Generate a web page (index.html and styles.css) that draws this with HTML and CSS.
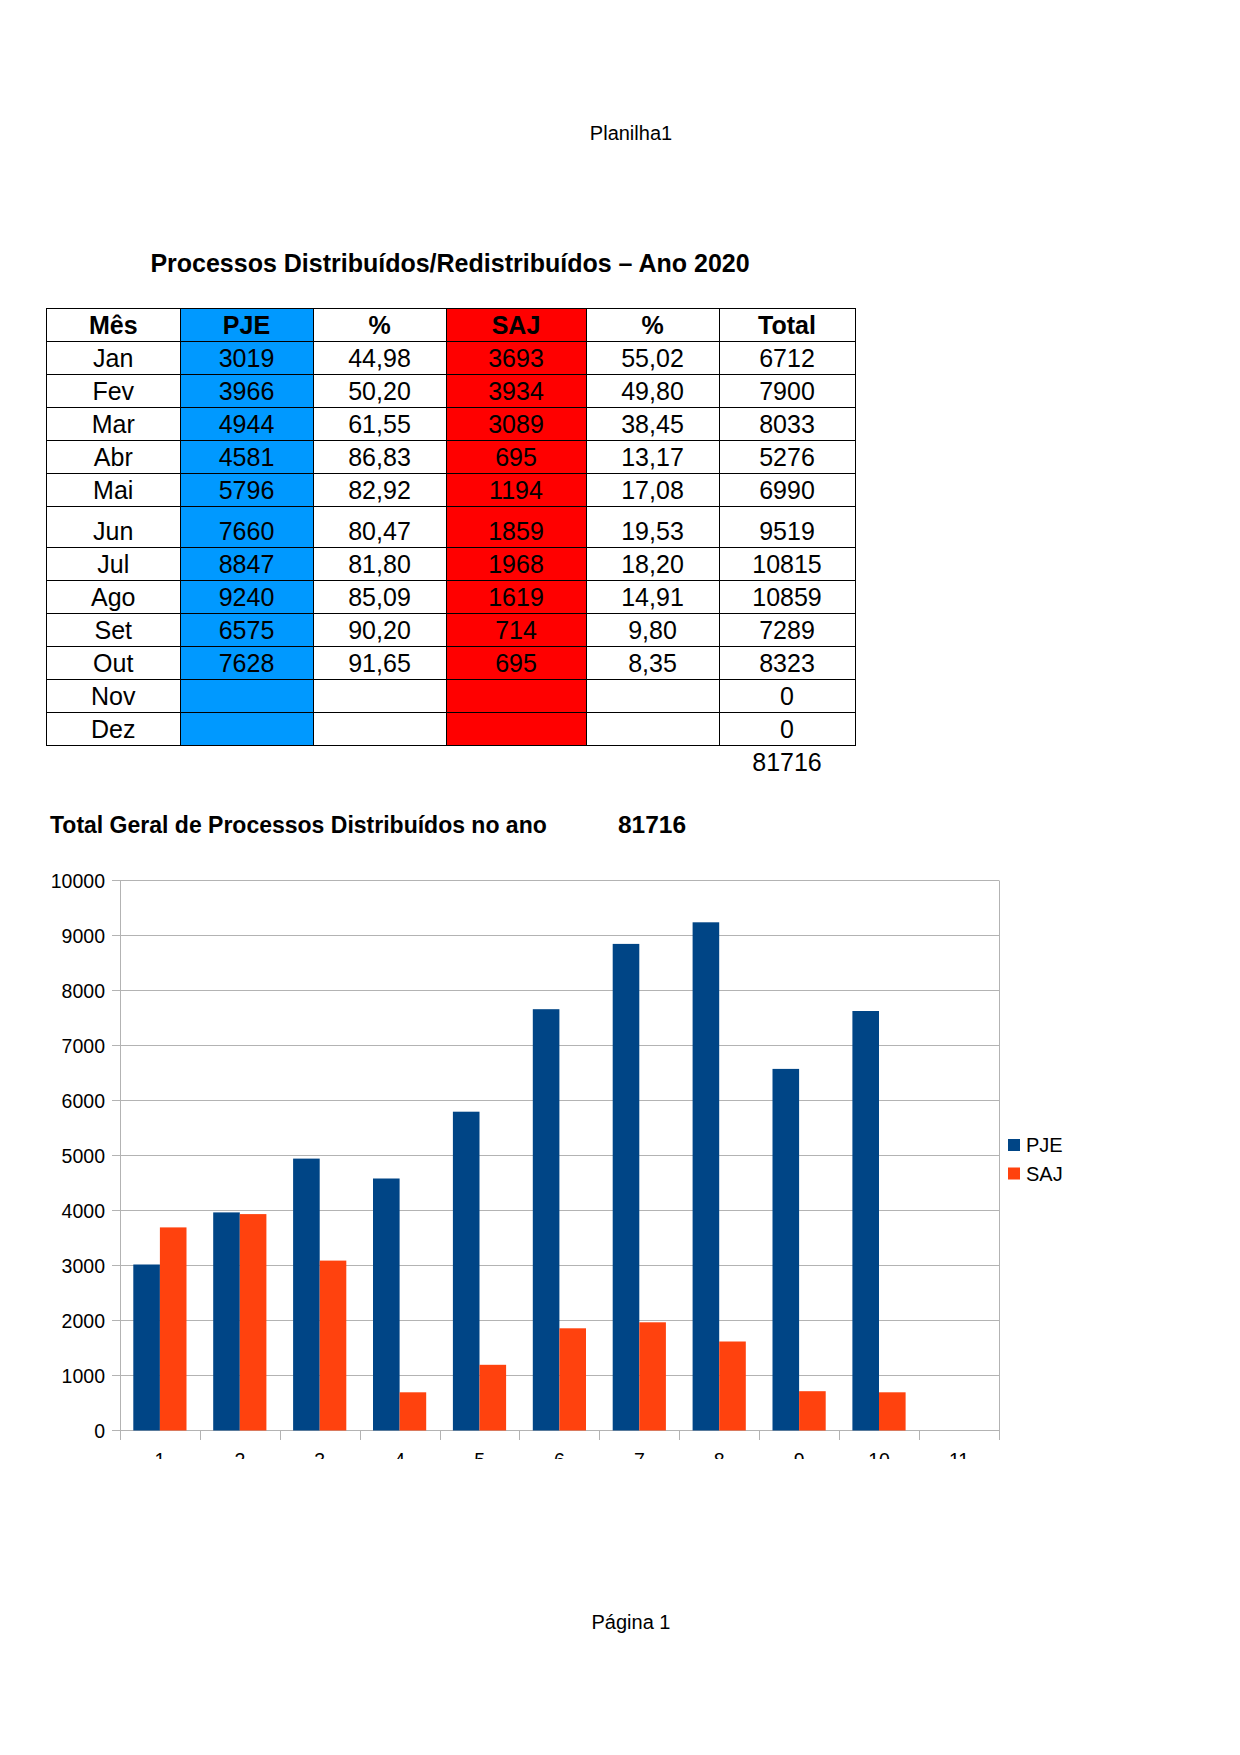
FILE: index.html
```html
<!DOCTYPE html>
<html lang="pt-BR">
<head>
<meta charset="utf-8">
<title>Planilha1</title>
<link rel="stylesheet" href="styles.css">
</head>
<body>
<div class="page">
  <header class="page-header">Planilha1</header>

  <section class="sheet">
    <h1 class="sheet-title">Processos Distribuídos/Redistribuídos – Ano 2020</h1>
    <table class="data">
      <colgroup>
        <col class="c-mes"><col class="c-pje"><col class="c-pct"><col class="c-saj"><col class="c-pct"><col class="c-total">
      </colgroup>
      <thead>
        <tr><th>Mês</th><th class="pje">PJE</th><th>%</th><th class="saj">SAJ</th><th>%</th><th>Total</th></tr>
      </thead>
      <tbody>
        <tr><td>Jan</td><td class="pje">3019</td><td>44,98</td><td class="saj">3693</td><td>55,02</td><td>6712</td></tr>
        <tr><td>Fev</td><td class="pje">3966</td><td>50,20</td><td class="saj">3934</td><td>49,80</td><td>7900</td></tr>
        <tr><td>Mar</td><td class="pje">4944</td><td>61,55</td><td class="saj">3089</td><td>38,45</td><td>8033</td></tr>
        <tr><td>Abr</td><td class="pje">4581</td><td>86,83</td><td class="saj">695</td><td>13,17</td><td>5276</td></tr>
        <tr><td>Mai</td><td class="pje">5796</td><td>82,92</td><td class="saj">1194</td><td>17,08</td><td>6990</td></tr>
        <tr class="tall"><td>Jun</td><td class="pje">7660</td><td>80,47</td><td class="saj">1859</td><td>19,53</td><td>9519</td></tr>
        <tr><td>Jul</td><td class="pje">8847</td><td>81,80</td><td class="saj">1968</td><td>18,20</td><td>10815</td></tr>
        <tr><td>Ago</td><td class="pje">9240</td><td>85,09</td><td class="saj">1619</td><td>14,91</td><td>10859</td></tr>
        <tr><td>Set</td><td class="pje">6575</td><td>90,20</td><td class="saj">714</td><td>9,80</td><td>7289</td></tr>
        <tr><td>Out</td><td class="pje">7628</td><td>91,65</td><td class="saj">695</td><td>8,35</td><td>8323</td></tr>
        <tr><td>Nov</td><td class="pje"></td><td></td><td class="saj"></td><td></td><td>0</td></tr>
        <tr><td>Dez</td><td class="pje"></td><td></td><td class="saj"></td><td></td><td>0</td></tr>
        <tr class="sum"><td></td><td></td><td></td><td></td><td></td><td>81716</td></tr>
      </tbody>
    </table>

    <div class="grand">
      <span class="grand-label">Total Geral de Processos Distribuídos no ano</span>
      <span class="grand-value">81716</span>
    </div>
  </section>

  <figure class="chart">
    <svg width="1060" height="599" viewBox="40 860 1060 599" xmlns="http://www.w3.org/2000/svg">
      <g class="grid">
        <line x1="112" y1="880.5" x2="999" y2="880.5"/>
        <line x1="112" y1="935.5" x2="999" y2="935.5"/>
        <line x1="112" y1="990.5" x2="999" y2="990.5"/>
        <line x1="112" y1="1045.5" x2="999" y2="1045.5"/>
        <line x1="112" y1="1100.5" x2="999" y2="1100.5"/>
        <line x1="112" y1="1155.5" x2="999" y2="1155.5"/>
        <line x1="112" y1="1210.5" x2="999" y2="1210.5"/>
        <line x1="112" y1="1265.5" x2="999" y2="1265.5"/>
        <line x1="112" y1="1320.5" x2="999" y2="1320.5"/>
        <line x1="112" y1="1375.5" x2="999" y2="1375.5"/>
        <line x1="112" y1="1430.5" x2="999" y2="1430.5"/>
        <line x1="120.5" y1="880.5" x2="120.5" y2="1440"/>
        <line x1="999.5" y1="880.5" x2="999.5" y2="1440"/>
        <line x1="200.5" y1="1430.5" x2="200.5" y2="1440"/>
        <line x1="280.5" y1="1430.5" x2="280.5" y2="1440"/>
        <line x1="360.5" y1="1430.5" x2="360.5" y2="1440"/>
        <line x1="440.5" y1="1430.5" x2="440.5" y2="1440"/>
        <line x1="519.5" y1="1430.5" x2="519.5" y2="1440"/>
        <line x1="599.5" y1="1430.5" x2="599.5" y2="1440"/>
        <line x1="679.5" y1="1430.5" x2="679.5" y2="1440"/>
        <line x1="759.5" y1="1430.5" x2="759.5" y2="1440"/>
        <line x1="839.5" y1="1430.5" x2="839.5" y2="1440"/>
        <line x1="919.5" y1="1430.5" x2="919.5" y2="1440"/>
      </g>
      <g class="ylabels">
        <text x="105" y="888">10000</text>
        <text x="105" y="943">9000</text>
        <text x="105" y="998">8000</text>
        <text x="105" y="1053">7000</text>
        <text x="105" y="1108">6000</text>
        <text x="105" y="1163">5000</text>
        <text x="105" y="1218">4000</text>
        <text x="105" y="1273">3000</text>
        <text x="105" y="1328">2000</text>
        <text x="105" y="1383">1000</text>
        <text x="105" y="1438">0</text>
      </g>
      <g class="bars-pje">
        <rect x="133.3" y="1264.5" width="26.6" height="166"/>
        <rect x="213.2" y="1212.4" width="26.6" height="218.1"/>
        <rect x="293.1" y="1158.6" width="26.6" height="271.9"/>
        <rect x="373.0" y="1178.5" width="26.6" height="252"/>
        <rect x="452.9" y="1111.7" width="26.6" height="318.8"/>
        <rect x="532.8" y="1009.2" width="26.6" height="421.3"/>
        <rect x="612.7" y="943.9" width="26.6" height="486.6"/>
        <rect x="692.6" y="922.3" width="26.6" height="508.2"/>
        <rect x="772.5" y="1068.9" width="26.6" height="361.6"/>
        <rect x="852.4" y="1011.0" width="26.6" height="419.5"/>
      </g>
      <g class="bars-saj">
        <rect x="159.9" y="1227.4" width="26.6" height="203.1"/>
        <rect x="239.8" y="1214.1" width="26.6" height="216.4"/>
        <rect x="319.7" y="1260.6" width="26.6" height="169.9"/>
        <rect x="399.6" y="1392.3" width="26.6" height="38.2"/>
        <rect x="479.5" y="1364.8" width="26.6" height="65.7"/>
        <rect x="559.4" y="1328.3" width="26.6" height="102.2"/>
        <rect x="639.3" y="1322.3" width="26.6" height="108.2"/>
        <rect x="719.2" y="1341.5" width="26.6" height="89"/>
        <rect x="799.1" y="1391.2" width="26.6" height="39.3"/>
        <rect x="879.0" y="1392.3" width="26.6" height="38.2"/>
      </g>
      <g class="xlabels">
        <text x="160" y="1467">1</text>
        <text x="239.9" y="1467">2</text>
        <text x="319.8" y="1467">3</text>
        <text x="399.7" y="1467">4</text>
        <text x="479.6" y="1467">5</text>
        <text x="559.5" y="1467">6</text>
        <text x="639.4" y="1467">7</text>
        <text x="719.3" y="1467">8</text>
        <text x="799.2" y="1467">9</text>
        <text x="879.1" y="1467">10</text>
        <text x="959" y="1467">11</text>
      </g>
      <g class="legend">
        <rect class="sw-pje" x="1008" y="1139" width="12" height="12"/>
        <text x="1026" y="1152">PJE</text>
        <rect class="sw-saj" x="1008" y="1167.5" width="12" height="12"/>
        <text x="1026" y="1180.5">SAJ</text>
      </g>
    </svg>
  </figure>

  <footer class="page-footer">Página 1</footer>
</div>
</body>
</html>
```

FILE: styles.css
```css
html, body {
  margin: 0;
  padding: 0;
  background: #fff;
}

body {
  font-family: "Liberation Sans", Arial, sans-serif;
  color: #000;
}

.page {
  width: 1240px;
  padding-top: 121px;
}

.page-header,
.page-footer {
  font-size: 20px;
  line-height: 24px;
  text-align: center;
  padding-left: 22px;
}

.sheet {
  margin-top: 104px;
  margin-left: 46px;
  width: 808px;
}

.sheet-title {
  margin: 0;
  font-size: 25px;
  line-height: 28px;
  font-weight: bold;
  text-align: center;
}

.data {
  margin-top: 30.5px;
  width: 808px;
  border-collapse: collapse;
  table-layout: fixed;
  font-size: 25px;
}

.c-mes { width: 133.5px; }
.c-pje { width: 133px; }
.c-pct { width: 133px; }
.c-saj { width: 140px; }
.c-total { width: 136px; }

.data th,
.data td {
  border: 1px solid #000;
  padding: 0;
  height: 32px;
  line-height: 28px;
  text-align: center;
  vertical-align: middle;
}

.data th {
  font-weight: bold;
}

.data .pje {
  background: #0099ff;
}

.data .saj {
  background: #ff0000;
}

.data tr.tall td {
  height: 38.4px;
  vertical-align: bottom;
  padding-bottom: 2.5px;
}

.data tr.sum td {
  border: none;
}

.grand {
  margin-top: 33px;
  display: grid;
  grid-template-columns: 133.5px 133px 133px 140px 133px 136px;
  align-items: baseline;
  line-height: 28px;
  font-weight: bold;
}

.grand-label {
  grid-column: 1 / 5;
  padding-left: 4px;
  font-size: 23px;
  white-space: nowrap;
}

.grand-value {
  grid-column: 5 / 6;
  text-align: center;
  font-size: 24.5px;
}

.chart {
  margin: 21px 0 0 40px;
}

.chart svg {
  display: block;
  overflow: hidden;
}

.chart .grid line {
  stroke: #b3b3b3;
  stroke-width: 1;
}

.chart text {
  font-family: "Liberation Sans", Arial, sans-serif;
  font-size: 19.5px;
  fill: #000;
}

.chart .legend text {
  font-size: 20px;
}

.chart .ylabels text {
  text-anchor: end;
}

.chart .xlabels text {
  text-anchor: middle;
}

.chart .bars-pje rect,
.chart .sw-pje {
  fill: #004586;
}

.chart .bars-saj rect,
.chart .sw-saj {
  fill: #ff420e;
}

.page-footer {
  margin-top: 151px;
}
```
